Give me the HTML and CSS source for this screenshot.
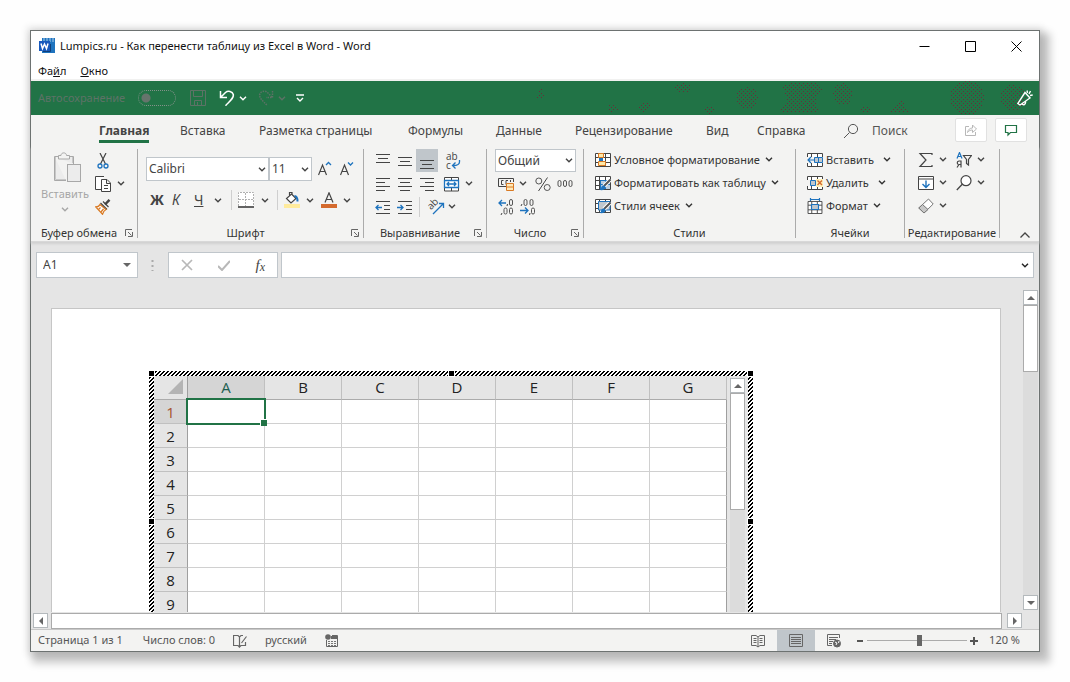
FILE: index.html
```html
<!DOCTYPE html>
<html lang="ru">
<head>
<meta charset="utf-8">
<title>Lumpics.ru - Как перенести таблицу из Excel в Word - Word</title>
<link rel="stylesheet" href="styles.css">
</head>
<body>
<svg class="defs" aria-hidden="true">
  <symbol id="chev" viewBox="0 0 8 5"><path d="M1 .8L4 3.8L7 .8" fill="none" stroke="currentColor" stroke-width="1.4"/></symbol>
  <symbol id="launch" viewBox="0 0 8 8"><path d="M.5 7V.5H7M3 3L6.5 6.5M7.5 3V7.5H3" fill="none" stroke="#666" /></symbol>
  <symbol id="grid" viewBox="0 0 16 14"><path d="M.5 .5H15.500V13.500H.5ZM.5 4.500H15.500M.5 9.500H15.500M4.500 .5V13.500M10.500 .5V13.500" fill="#fff" stroke="#444"/></symbol>
  <symbol id="pen" viewBox="0 0 12 12"><path d="M11.500 .5L5 7" stroke="#fff" stroke-width="4"/><path d="M11.500 .5L5 7" stroke="#555" stroke-width="2"/><path d="M5.500 6.500C3 6 2 8 2 9.500L.5 11C4 11.500 7 10.500 6.500 8Z" fill="#1e73be"/></symbol>
</svg>

<main class="window">
  <header class="titlebar">
    <svg class="i16" viewBox="0 0 16 16"><path d="M3 0H16V15H3Z" fill="#1e73be"/><path d="M4 1H15M4 3H15" stroke="#a9cdec" stroke-dasharray="2 1"/><path d="M0 3H11V13H0Z" fill="#185abd"/><path d="M2 5.500L3.500 10.500L5.500 6L7.500 10.500L9 5.500" fill="none" stroke="#fff" stroke-width="1.500"/><path d="M4 13.500H11.500V6" fill="none" stroke="#103f7a"/></svg>
    <h1>Lumpics.ru - Как перенести таблицу из Excel в Word - Word</h1>
    <div class="wincontrols">
      <button aria-label="Свернуть"><svg viewBox="0 0 11 11"><path d="M.5 5.500H10.500"/></svg></button>
      <button aria-label="Развернуть"><svg viewBox="0 0 11 11"><path d="M.5 .5H10.500V10.500H.5Z"/></svg></button>
      <button aria-label="Закрыть"><svg viewBox="0 0 11 11"><path d="M.5 .5L10.500 10.500M10.500 .5L.5 10.500"/></svg></button>
    </div>
  </header>
  <nav class="menubar"><a href="#file">Фа<u>й</u>л</a><a href="#window"><u>О</u>кно</a></nav>

  <div class="quick">
    <svg class="decor" viewBox="0 0 510 34" shape-rendering="crispEdges" aria-hidden="true">
      <defs><pattern id="dots" width="4" height="4" patternUnits="userSpaceOnUse"><path d="M0 0h1v1H0zM2 2h1v1H2z" fill="#653038"/></pattern></defs>
      <g fill="url(#dots)"><path d="M12 6L17 18H7Z"/><ellipse cx="84" cy="27" rx="5" ry="4"/><ellipse cx="115" cy="26" rx="6" ry="5"/><ellipse cx="154" cy="7" rx="8" ry="5"/><ellipse cx="180" cy="29" rx="5" ry="4"/><ellipse cx="218" cy="17" rx="11" ry="11"/><path d="M252 5L262 2H288L294 8L286 16L290 32H250L258 18Z"/><ellipse cx="314" cy="13" rx="10" ry="11"/><ellipse cx="336" cy="28" rx="5" ry="3"/><path d="M358 32L372 18L380 32Z"/><circle cx="438" cy="17" r="17"/><ellipse cx="484" cy="17" rx="13" ry="13"/></g>
    </svg>
    <label class="autosave"><span>Автосохранение</span><input type="checkbox" disabled></label>
    <button class="q-save" aria-label="Сохранить" disabled><svg class="i16" viewBox="0 0 16 16"><path d="M.5 .5H15.500V15.500H.5ZM3.500 .5V6.500H12.500V.5M4.500 15.500V10.500H11.500V15.500M7.500 12V15" fill="none" stroke="currentColor"/></svg></button>
    <button class="q-undo" aria-label="Отменить"><svg class="i16" viewBox="0 0 16 16"><path d="M1.500 1V7.500H8M2 7L6.500 2.500C9 .2 13.500 1.200 14.300 4.500C15 8 11.500 10.500 6.500 15.700" fill="none" stroke="currentColor" stroke-width="1.500"/></svg><svg class="chev"><use href="#chev"/></svg></button>
    <button class="q-redo" aria-label="Повторить" disabled><svg class="i16" viewBox="0 0 16 16"><path d="M14.500 1V7.500H8M14 7L9.500 2.500C7 .2 2.500 1.200 1.700 4.500C1 8 4.500 10.500 9.500 15.700" fill="none" stroke="currentColor" stroke-width="1.500" stroke-dasharray="1.500 1"/></svg><svg class="chev"><use href="#chev"/></svg></button>
    <button class="q-more" aria-label="Настройка панели"><svg class="i8" viewBox="0 0 8 8"><path d="M0 1H8M1 4L4 7L7 4" fill="none" stroke="currentColor" stroke-width="1.400"/></svg></button>
    <button class="q-horn" aria-label="Новые возможности"><svg class="i16" viewBox="0 0 16 16"><path d="M8 2.500L13 8L3 15L.8 13.500ZM5 13.500C6 16 9 14.500 8.500 11.500M10 .5L10.500 3M13.500 1L12 4M15.700 5L13 5.500" fill="none" stroke="#fff" stroke-width="1.400"/></svg></button>
  </div>

  <nav class="tabs">
    <a class="active" href="#home">Главная</a><a href="#insert">Вставка</a><a href="#layout">Разметка страницы</a><a href="#formulas">Формулы</a><a href="#data">Данные</a><a href="#review">Рецензирование</a><a href="#view">Вид</a><a href="#help">Справка</a>
    <a class="find" href="#search"><svg class="i16" viewBox="0 0 16 16"><circle cx="10" cy="6" r="4.600" fill="none" stroke="#555"/><path d="M6.500 9.500L1 15" stroke="#555"/></svg>Поиск</a>
    <div class="share">
      <button aria-label="Поделиться"><svg class="i14" viewBox="0 0 14 14"><path d="M5 3.500H1.500V12.500H11.500V9M3.500 9.500C4 6.500 6 5 8.500 5V2L12.500 6L8.500 9.500V7C6.500 7 5 7.500 3.500 9.500Z" fill="none" stroke="#b8b8b8"/></svg></button>
      <button aria-label="Примечания"><svg class="i14" viewBox="0 0 14 14"><path d="M1.500 2.500H12.500V9.500H6.500L4 12V9.500H1.500Z" fill="none" stroke="#217346" stroke-width="1.200"/></svg></button>
    </div>
  </nav>

  <section class="ribbon">
    <div class="group clip">
      <div class="body">
        <button class="paste" disabled><svg viewBox="0 0 28 31"><path d="M1.500 4.500H20.500V12M1.500 4.500V28.500H13" fill="#ececec" stroke="#a8a8a8"/><path d="M2.500 5V27.500H13M19.500 5V11" fill="none" stroke="#c8c8c8"/><path d="M5.500 7V3.500H8C8 0 13.500 0 13.500 3.500H16.500V7Z" fill="#f3f3f2" stroke="#a8a8a8"/><rect x="14.500" y="12.500" width="13" height="17" fill="#ececec" stroke="#a8a8a8"/></svg><span>Вставить</span><svg class="chev"><use href="#chev"/></svg></button>
        <div class="col">
          <button aria-label="Вырезать"><svg class="i16" viewBox="0 0 16 16"><path d="M5 0L10.500 11M11 0L5.500 11" stroke="#444" stroke-width="1.200"/><circle cx="5" cy="13" r="2" fill="none" stroke="#1e73be" stroke-width="1.300"/><circle cx="11" cy="13" r="2" fill="none" stroke="#1e73be" stroke-width="1.300"/></svg></button>
          <button aria-label="Копировать"><svg class="i16" viewBox="0 0 16 16"><path d="M6 13.500H.5V.5H9" fill="#fff" stroke="#444"/><path d="M6.500 3.500H12L15.500 7V15.500H6.500ZM11.500 3.500V7.500H15.500M9 9.500H13M9 12.500H13" fill="#fff" stroke="#444"/></svg><svg class="chev"><use href="#chev"/></svg></button>
          <button aria-label="Формат по образцу"><svg class="i16" viewBox="0 0 16 16"><path d="M14.500 .8L10 5.500" stroke="#444" stroke-width="2.500"/><path d="M5.500 4L12 10.500M8 2.500L13.500 8" stroke="#444" stroke-width="1.200"/><path d="M5 5.500C4 7.500 2.500 8 .8 8L7.500 15.200C8.500 12 10 11 11 10.500Z" fill="#fff" stroke="#d97a24" stroke-width="1.300"/><path d="M3.500 10.500L5.500 8.500M6 13L8.500 10" stroke="#d97a24" stroke-width="1.300"/></svg></button>
        </div>
      </div>
      <footer><span>Буфер обмена</span><button aria-label="Параметры буфера"><svg class="i8"><use href="#launch"/></svg></button></footer>
    </div>

    <div class="group font">
      <div class="body">
        <div class="row combos">
          <select aria-label="Шрифт"><option>Calibri</option></select><select aria-label="Размер"><option>11</option></select>
          <button aria-label="Увеличить размер"><svg class="i16" viewBox="0 0 16 16"><path d="M.5 14L4.500 4L8.500 14M2 10.500H7" fill="none" stroke="#444" stroke-width="1.200"/><path d="M8 4L10.500 1.500L13 4" fill="none" stroke="#1e73be" stroke-width="1.300"/></svg></button>
          <button aria-label="Уменьшить размер"><svg class="i16" viewBox="0 0 16 16"><path d="M.5 14L4.500 4L8.500 14M2 10.500H7" fill="none" stroke="#444" stroke-width="1.200"/><path d="M8 1.500L10.500 4L13 1.500" fill="none" stroke="#1e73be" stroke-width="1.300"/></svg></button>
        </div>
        <div class="row styles-row">
          <button class="fmt"><b>Ж</b></button><button class="fmt"><i>К</i></button><button class="fmt"><u>Ч</u></button><button aria-label="Вид подчеркивания"><svg class="chev"><use href="#chev"/></svg></button>
          <span class="sep"></span>
          <button aria-label="Границы"><svg class="i16" viewBox="0 0 16 16"><path d="M0 0H16V14H0Z" fill="#fff"/><path d="M.5 14V.5H15.500V14M7.500 1V14M1 7.500H15" fill="none" stroke="#b0b0b0" stroke-dasharray="2 1"/><path d="M0 15H16" stroke="#333" stroke-width="1.500"/></svg></button><button aria-label="Вид границ"><svg class="chev"><use href="#chev"/></svg></button>
          <span class="sep"></span>
          <button aria-label="Цвет заливки"><svg class="i16" viewBox="0 0 16 16"><path d="M0 12H16V16H0Z" fill="#ffeb9c"/><path d="M7.500 2L12 6.500L7 11L2.500 6.500ZM5.500 4V.5H8V3" fill="#fff" stroke="#444" stroke-width="1.200"/><path d="M10.500 4C13 4 13.500 6 13.500 9.500" fill="none" stroke="#1e73be" stroke-width="2"/></svg></button><button aria-label="Палитра заливки"><svg class="chev"><use href="#chev"/></svg></button>
          <button aria-label="Цвет текста"><svg class="i16" viewBox="0 0 16 16"><path d="M0 12H16V16H0Z" fill="#d46a2e"/><path d="M4 10.500L8 .8L12 10.500M5.500 7.500H10.500" fill="none" stroke="#444" stroke-width="1.200"/></svg></button><button aria-label="Палитра текста"><svg class="chev"><use href="#chev"/></svg></button>
        </div>
      </div>
      <footer><span>Шрифт</span><button aria-label="Параметры шрифта"><svg class="i8"><use href="#launch"/></svg></button></footer>
    </div>

    <div class="group align">
      <div class="body">
        <div class="row">
          <button aria-label="По верхнему краю"><svg class="i16" viewBox="0 0 16 16"><path d="M1 1.500H15M3 5.500H13M1 9.500H15"/></svg></button>
          <button aria-label="По середине"><svg class="i16" viewBox="0 0 16 16"><path d="M1 4.500H15M3 8.500H13M1 12.500H15"/></svg></button>
          <button class="on" aria-label="По нижнему краю"><svg class="i16" viewBox="0 0 16 16"><path d="M1 7.500H15M3 11.500H13M1 15.500H15"/></svg></button>
          <button class="wide wrap" aria-label="Перенести текст"><svg viewBox="0 0 18 20"><text x="3" y="9">ab</text><text x="3" y="18">c</text><path class="blue" d="M16.500 9V11C16.500 13.500 15 14.500 10 14.500M12.500 11.500L9.500 14.500L12.500 17.500"/></svg></button>
        </div>
        <div class="row">
          <button aria-label="По левому краю"><svg class="i16" viewBox="0 0 16 16"><path d="M1 2.500H15M1 6.500H10M1 10.500H15M1 14.500H10"/></svg></button>
          <button aria-label="По центру"><svg class="i16" viewBox="0 0 16 16"><path d="M1 2.500H15M3 6.500H13M1 10.500H15M3 14.500H13"/></svg></button>
          <button aria-label="По правому краю"><svg class="i16" viewBox="0 0 16 16"><path d="M1 2.500H15M6 6.500H15M1 10.500H15M6 14.500H15"/></svg></button>
          <button class="wide" aria-label="Объединить"><svg class="i16" viewBox="0 0 16 16"><path class="white" d="M1.500 1.500H15.500V15H1.500ZM8.500 1V4M8.500 12V15"/><path class="blue" d="M1.500 4.500H15.500V11.500H1.500ZM4 8H13M6 6L4 8L6 10M11 6L13 8L11 10"/></svg><svg class="chev"><use href="#chev"/></svg></button>
        </div>
        <div class="row">
          <button aria-label="Уменьшить отступ"><svg class="i16" viewBox="0 0 16 16"><path d="M1 2.500H15M9 6.500H15M9 10.500H15M1 14.500H15"/><path class="blue" d="M7 8.500H1M3.500 6L1 8.500L3.500 11"/></svg></button>
          <button aria-label="Увеличить отступ"><svg class="i16" viewBox="0 0 16 16"><path d="M1 2.500H15M9 6.500H15M9 10.500H15M1 14.500H15"/><path class="blue" d="M0 8.500H6M3.500 6L6 8.500L3.500 11"/></svg></button>
          <span class="sep"></span>
          <button class="orient" aria-label="Ориентация"><svg class="i16" viewBox="0 0 16 16"><text x="-1" y="8" transform="rotate(-45 5 5)">ab</text><path class="blue" d="M5 15L15 5M11 4.500H15.500V9"/></svg><svg class="chev"><use href="#chev"/></svg></button>
        </div>
      </div>
      <footer><span>Выравнивание</span><button aria-label="Параметры выравнивания"><svg class="i8"><use href="#launch"/></svg></button></footer>
    </div>

    <div class="group number">
      <div class="body">
        <select aria-label="Числовой формат"><option>Общий</option></select>
        <div class="row">
          <button aria-label="Денежный формат"><svg class="i16" viewBox="0 0 16 16"><path d="M8 10.500H.5V2.500H15.500V6M5.500 4.500H3.500V8.500H5.500M8 8.500V4.500H10M12.500 4V6" fill="none" stroke="#444"/><path class="coin" d="M8.500 7.500H15.500V14.500H8.500ZM8.500 11H15.500"/></svg><svg class="chev"><use href="#chev"/></svg></button>
          <button class="pct" aria-label="Процентный формат"><svg class="i16" viewBox="0 0 16 16"><circle cx="3.800" cy="5" r="3"/><circle cx="12.200" cy="11.500" r="3"/><path d="M12.500 1.500L3.500 15"/></svg></button>
          <button class="zeros" aria-label="Формат с разделителями"><svg class="i16" viewBox="0 0 16 16"><rect x="1" y="4.500" width="3" height="6" rx="1.500"/><rect x="6.500" y="4.500" width="3" height="6" rx="1.500"/><rect x="12" y="4.500" width="3" height="6" rx="1.500"/></svg></button>
        </div>
        <div class="row">
          <button aria-label="Увеличить разрядность"><svg class="i16" viewBox="0 0 16 16"><rect x="11.500" y="0.5" width="3" height="6" rx="1.500"/><rect x="6" y="9" width="3" height="6" rx="1.500"/><rect x="11.500" y="9" width="3" height="6" rx="1.500"/><path d="M4 14L3 16M9.500 5L9 7"/><path class="blue" d="M8 4H1M4 1L1 4L4 7"/></svg></button>
          <button aria-label="Уменьшить разрядность"><svg class="i16" viewBox="0 0 16 16"><rect x="4" y="0.5" width="3" height="6" rx="1.500"/><rect x="10" y="0.5" width="3" height="6" rx="1.500"/><rect x="11.500" y="9" width="3" height="6" rx="1.500"/><path d="M2 5L1 7M10 14L9.500 16"/><path class="blue" d="M0 11.500H8M5 8.500L8 11.500L5 14.500"/></svg></button>
        </div>
      </div>
      <footer><span>Число</span><button aria-label="Параметры числа"><svg class="i8"><use href="#launch"/></svg></button></footer>
    </div>

    <div class="group stylesg">
      <div class="body">
        <button class="cmd"><svg class="i16" viewBox="0 0 16 16"><use href="#grid" width="16" height="14" y="1"/><path d="M3.500 1.500H8.500V5.500H3.500ZM3.500 9.500H10.500V13.500H3.500Z" fill="#ffe9a8" stroke="#d97a24"/><path d="M4 7.500H8" stroke="#1e73be" stroke-width="3"/></svg><span>Условное форматирование</span><svg class="chev"><use href="#chev"/></svg></button>
        <button class="cmd"><svg class="i16" viewBox="0 0 16 16"><use href="#grid" width="16" height="14" y="1"/><path d="M5 6H15V14H5Z" fill="#b8cde0"/><path d="M5.500 14V5.500H15M5 9.500H15M10.500 6V14" fill="none" stroke="#1e73be"/><use href="#pen" x="4" y="4" width="12" height="12"/></svg><span>Форматировать как таблицу</span><svg class="chev"><use href="#chev"/></svg></button>
        <button class="cmd"><svg class="i16" viewBox="0 0 16 16"><use href="#grid" width="16" height="14" y="1"/><path d="M3.500 3.500H15V12H3.500Z" fill="#c0c7cd" stroke="#1e73be"/><use href="#pen" x="4" y="4" width="12" height="12"/></svg><span>Стили ячеек</span><svg class="chev"><use href="#chev"/></svg></button>
      </div>
      <footer><span>Стили</span></footer>
    </div>

    <div class="group cells">
      <div class="body">
        <button class="cmd spaced"><svg class="i16" viewBox="0 0 16 16"><use href="#grid" width="16" height="14" y="1"/><path d="M0 5H16V11H0Z" fill="#f3f3f2"/><path d="M7.500 5.500H15.500V10.500H7.500ZM11.500 5V11" fill="#c0c7cd" stroke="#1e73be"/><path d="M7 8H1M4 5L1 8L4 11" fill="none" stroke="#1e73be" stroke-width="1.200"/></svg><span>Вставить</span><svg class="chev"><use href="#chev"/></svg></button>
        <button class="cmd spaced"><svg class="i16" viewBox="0 0 16 16"><use href="#grid" width="16" height="14" y="1"/><path d="M0 5H16V11H0Z" fill="#f3f3f2"/><path d="M3.500 5.500H8.500V10.500H3.500Z" fill="#c0c7cd" stroke="#1e73be"/><path d="M9 4H16V12H9Z" fill="#fff0b8"/><path d="M10.500 5.500L15 10M15 5.500L10.500 10" stroke="#d46a2e" stroke-width="1.400"/></svg><span>Удалить</span><svg class="chev"><use href="#chev"/></svg></button>
        <button class="cmd"><svg class="i16" viewBox="0 0 16 16"><use href="#grid" width="16" height="13" y="3"/><path d="M4 0H12V3H4Z" fill="#f3f3f2"/><path d="M3.500 0V3M12.500 0V3M3.500 1.500H12.500M4.500 6.500H11.500V11.500H4.500Z" fill="#c0c7cd" stroke="#1e73be" stroke-width="1.200"/></svg><span>Формат</span><svg class="chev"><use href="#chev"/></svg></button>
      </div>
      <footer><span>Ячейки</span></footer>
    </div>

    <div class="group edit">
      <div class="body">
        <button aria-label="Сумма"><svg class="i16" viewBox="0 0 16 16"><path d="M14 3V1.500H2L8 8L2 14.500H14V13" fill="none" stroke="#444" stroke-width="1.200"/></svg><svg class="chev"><use href="#chev"/></svg></button>
        <button aria-label="Сортировка и фильтр"><svg class="i16" viewBox="0 0 16 16"><path d="M1 6.500L3.500 .5L6 6.500M2 4.500H5" fill="none" stroke="#1e73be" stroke-width="1.200"/><path d="M5 15.500V9H3C.5 9.500 .8 12.500 3 12.500H5M3 12.500L1 15.500" fill="none" stroke="#444" stroke-width="1.200"/><path d="M7.500 3.500H15.500L12.500 7.500V13L10.500 11.500V7.500Z" fill="none" stroke="#444" stroke-width="1.200"/></svg><svg class="chev"><use href="#chev"/></svg></button>
        <button aria-label="Заполнить"><svg class="i16" viewBox="0 0 16 16"><path d="M.5 1.500H15.500V14.500H.5ZM.5 4H15.500" fill="#fff" stroke="#444"/><path d="M8 5.500V12.500M4.500 9L8 12.500L11.500 9" fill="none" stroke="#1e73be" stroke-width="1.400"/></svg><svg class="chev"><use href="#chev"/></svg></button>
        <button aria-label="Найти и выделить"><svg class="i16" viewBox="0 0 16 16"><circle cx="10" cy="5.700" r="5" fill="#fff" stroke="#444" stroke-width="1.200"/><path d="M6.500 9L.8 15" stroke="#444" stroke-width="1.300"/></svg><svg class="chev"><use href="#chev"/></svg></button>
        <button aria-label="Очистить"><svg class="i16" viewBox="0 0 16 16"><path d="M10.500 1L15.200 6L6 15L.8 10Z" fill="#fff" stroke="#777"/><path d="M4.500 6.500L10 11.500L6 15L.8 10Z" fill="#c8c8c8" stroke="#777"/></svg><svg class="chev"><use href="#chev"/></svg></button>
      </div>
      <footer><span>Редактирование</span></footer>
    </div>
    <button class="collapse" aria-label="Свернуть ленту"><svg viewBox="0 0 10 6"><path d="M.5 5.500L5 1L9.500 5.500" fill="none" stroke="#444" stroke-width="1.300"/></svg></button>
  </section>

  <div class="formulabar">
    <label class="namebox"><input aria-label="Имя ячейки" value="A1"><svg class="i8" viewBox="0 0 8 8"><path d="M0 2H8L4 6Z" fill="#666"/></svg></label>
    <svg class="grip" viewBox="0 0 3 12"><path d="M1.500 1V12" stroke="#aaa" stroke-width="2" stroke-dasharray="2 3"/></svg>
    <div class="fxbox">
      <button aria-label="Отмена"><svg viewBox="0 0 12 12"><path d="M1 1L11 11M11 1L1 11" fill="none" stroke="#b8b8b8" stroke-width="1.700"/></svg></button>
      <button aria-label="Ввод"><svg viewBox="0 0 12 12"><path d="M0 7L4 11L12 2" fill="none" stroke="#b8b8b8" stroke-width="2"/></svg></button>
      <button class="fx" aria-label="Вставить функцию"><i>f</i><i class="sub">x</i></button>
    </div>
    <label class="formula"><input aria-label="Строка формул"><svg class="chev"><use href="#chev"/></svg></label>
  </div>

  <div class="work">
    <div class="page">
      <div class="object">
        <span class="h tl"></span><span class="h tm"></span><span class="h tr"></span><span class="h ml"></span><span class="h mr"></span>
        <div class="sheet">
          <table>
            <thead><tr><th class="corner"><svg viewBox="0 0 16 16"><path d="M15 0V15H0Z" fill="#b4b4b4"/></svg></th><th class="sel">A</th><th>B</th><th>C</th><th>D</th><th>E</th><th>F</th><th>G</th></tr></thead>
            <tbody>
              <tr><th class="sel">1</th><td class="cursor"></td><td></td><td></td><td></td><td></td><td></td><td></td></tr>
              <tr><th>2</th><td></td><td></td><td></td><td></td><td></td><td></td><td></td></tr>
              <tr><th>3</th><td></td><td></td><td></td><td></td><td></td><td></td><td></td></tr>
              <tr><th>4</th><td></td><td></td><td></td><td></td><td></td><td></td><td></td></tr>
              <tr><th>5</th><td></td><td></td><td></td><td></td><td></td><td></td><td></td></tr>
              <tr><th>6</th><td></td><td></td><td></td><td></td><td></td><td></td><td></td></tr>
              <tr><th>7</th><td></td><td></td><td></td><td></td><td></td><td></td><td></td></tr>
              <tr><th>8</th><td></td><td></td><td></td><td></td><td></td><td></td><td></td></tr>
              <tr><th>9</th><td></td><td></td><td></td><td></td><td></td><td></td><td></td></tr>
            </tbody>
          </table>
          <div class="vbar inner"><button aria-label="Вверх"><svg class="i8" viewBox="0 0 8 8"><path d="M0 6H8L4 2Z"/></svg></button><div class="thumb"></div></div>
        </div>
      </div>
    </div>
    <div class="vbar"><button aria-label="Вверх"><svg class="i8" viewBox="0 0 8 8"><path d="M0 6H8L4 2Z"/></svg></button><div class="thumb"></div><button class="end" aria-label="Вниз"><svg class="i8" viewBox="0 0 8 8"><path d="M0 2H8L4 6Z"/></svg></button></div>
  </div>
  <div class="hbar"><button aria-label="Влево"><svg class="i8" viewBox="0 0 8 8"><path d="M6 0V8L2 4Z"/></svg></button><div class="thumb"></div><button aria-label="Вправо"><svg class="i8" viewBox="0 0 8 8"><path d="M2 0V8L6 4Z"/></svg></button></div>

  <footer class="status">
    <span>Страница 1 из 1</span><span class="words">Число слов: 0</span>
    <button aria-label="Правописание"><svg class="i14" viewBox="0 0 14 14"><path d="M5 11.500H.5V1.500H5L6.500 3L8 1.500H10M6.500 3V13L8 11.500H12.500V8M6.500 13L5 11.500M8.500 9L13.500 2.500" fill="none" stroke="#666" stroke-width="1.200"/></svg></button>
    <span>русский</span>
    <button class="macro" aria-label="Запись макроса"><svg class="i14" viewBox="0 0 14 14"><path d="M1.500 6V12.500H12.500V1.500H7" fill="none" stroke="#666"/><path d="M6 2H13V5H6Z" fill="#666"/><path d="M3 7.500H12M3 9.500H12M3 11.500H12" stroke="#777" stroke-dasharray="2 1"/><circle cx="3" cy="3" r="2.800" fill="#666"/></svg></button>
    <div class="views">
      <button aria-label="Режим чтения"><svg class="i14" viewBox="0 0 14 14"><path d="M.5 1.500H5L7 3L9 1.500H13.500V11.500H9L7 13L5 11.500H.5ZM7 3V13M2.500 4.500H5.500M2.500 6.500H5.500M2.500 8.500H5.500M8.500 4.500H11.500M8.500 6.500H11.500M8.500 8.500H11.500"/></svg></button>
      <button class="on" aria-label="Разметка страницы"><svg class="i14" viewBox="0 0 14 14"><path d="M.5 .5H13.500V12.500H.5ZM2 3.500H12M2 5.500H12M2 7.500H12M2 9.500H12"/></svg></button>
      <button aria-label="Веб-документ"><svg class="i14" viewBox="0 0 14 14"><path d="M5 11.500H.5V.5H12.500V4M2 3.500H11M2 5.500H9M2 7.500H6M2 9.500H5"/><circle cx="10" cy="9.500" r="3.500" fill="#666"/><path d="M8 8L10 9L9 11M12 7L11.500 9" stroke="#fff"/></svg></button>
    </div>
    <button class="zoombtn" aria-label="Уменьшить"><svg class="i8" viewBox="0 0 8 8"><path d="M1 4H7" stroke="#555" stroke-width="2"/></svg></button>
    <input type="range" aria-label="Масштаб" min="0" max="100" value="53">
    <button class="zoombtn" aria-label="Увеличить"><svg class="i8" viewBox="0 0 8 8"><path d="M0 4H8M4 0V8" stroke="#555" stroke-width="2"/></svg></button>
    <span class="pctval">120 %</span>
  </footer>
</main>
</body>
</html>
```

FILE: styles.css
```css
* { box-sizing: border-box; }
body { margin: 0; padding: 30px; height: 100vh; background: #fefefe; color: #222; font: 11px/16px "Noto Sans", "Open Sans", sans-serif; }
button { border: 0; padding: 0; background: none; font: inherit; color: #444; display: flex; align-items: center; }
a { color: inherit; text-decoration: none; }
svg { display: block; flex: none; }
input, select { font: inherit; font-size: 12px; color: #444; }
.defs { position: absolute; width: 0; height: 0; }
.i16 { width: 16px; height: 16px; }
.i14 { width: 14px; height: 14px; }
.i8 { width: 8px; height: 8px; }
.chev { width: 8px; height: 5px; }

.window { height: 100%; display: flex; flex-direction: column; background: #e5e5e5; border: 1px solid #6d7271; box-shadow: 0 0 7px 3px rgba(0,0,0,.1), 6px 7px 8px 4px rgba(0,0,0,.22); }

.titlebar { height: 30px; display: flex; align-items: center; gap: 5px; padding-left: 8px; background: #fff; }
.titlebar h1 { margin: 0; flex: 1; font-size: 11px; font-weight: 400; color: #111; white-space: nowrap; }
.wincontrols { display: flex; }
.wincontrols button { width: 46px; height: 28px; justify-content: center; }
.wincontrols svg { width: 11px; height: 11px; fill: none; stroke: #000; stroke-width: 1; }
.menubar { height: 20px; display: flex; gap: 14px; padding: 2px 7px; background: #fff; color: #111; border-bottom: 2px solid #f1f1f0; }

.quick { position: relative; height: 34px; display: flex; align-items: center; padding: 0 6px 0 7px; background: #217346; color: #fff; }
.quick button { position: relative; color: #fff; gap: 4px; }
.quick button:disabled, .autosave { color: #5d7266; }
.decor { position: absolute; right: 0; top: 0; width: 510px; height: 34px; }
.autosave { display: flex; align-items: center; gap: 6px; width: 138px; }
.autosave span { flex: 1; }
.autosave input { appearance: none; margin: 0; width: 38px; height: 16px; border: 1px dotted #84918a; border-radius: 8px; background: radial-gradient(circle at 7px 7px, #66746c 4px, transparent 5px); }
.q-save { margin-left: 14px; }
.q-undo { margin-left: 13px; }
.q-redo { margin-left: 11px; }
.q-more { margin-left: 10px; }
.q-horn { margin-left: auto; }

.tabs { height: 31px; display: grid; grid-template-columns: 81px 79px 149px 88px 79px 131px 51px 86px 82px 1fr; padding-left: 68px; background: #f3f3f2; color: #444; font-size: 12px; }
.tabs a { height: 28px; line-height: 31px; white-space: nowrap; }
.tabs .active { justify-self: start; font-weight: 700; border-bottom: 3px solid #217346; }
.tabs .find { display: flex; align-items: center; gap: 13px; height: 31px; color: #555; }
.share { display: flex; justify-content: flex-end; gap: 8px; padding: 3px 12px 0 0; }
.share button { width: 32px; height: 24px; justify-content: center; background: #fff; border: 1px solid #e1e1e1; border-radius: 2px; }

.ribbon { height: 96px; display: flex; padding-top: 3px; background: #f3f3f2; border-bottom: 1px solid #d8d8d8; box-shadow: 0 2px 2px #d0d0d0; }
.group { display: flex; flex-direction: column; height: 89px; border-right: 1px solid #ababab; color: #333; }
.group .body { flex: 1; }
.group footer { height: 14px; display: flex; align-items: center; justify-content: center; margin-bottom: -2px; line-height: 14px; white-space: nowrap; }
.group footer span { flex: 1; text-align: center; }
.row { display: flex; height: 23px; align-items: center; }
.sep { width: 1px; height: 20px; background: #cfcfcf; }
.cmd { height: 23px; padding-bottom: 2px; gap: 3px; white-space: nowrap; color: #333; }
.cmd .chev { margin-left: 2px; }

.clip { width: 107px; }
.clip .body { display: flex; padding-left: 9px; }
.paste { width: 50px; flex-direction: column; padding-top: 3px; gap: 3px; }
.paste svg:first-child { width: 28px; height: 31px; margin-left: 4px; }
.paste:disabled { color: #a6a6a6; }
.paste .chev { margin-top: 2px; }
.clip .col { padding-left: 5px; }
.clip .col button { height: 23px; gap: 6px; }
.clip footer, .font footer, .align footer, .number footer { padding: 0 4px 0 2px; }

.font { width: 226px; }
.font .body { padding: 8px 8px 0; }
.font select, .number select { appearance: none; height: 24px; margin: 0; padding: 0 2px; border: 1px solid #c0c6cb; border-radius: 0; background: #fff url("data:image/svg+xml,%3Csvg xmlns='http://www.w3.org/2000/svg' width='8' height='5'%3E%3Cpath d='M1 .8L4 3.8L7 .8' fill='none' stroke='%23444' stroke-width='1.4'/%3E%3C/svg%3E") no-repeat right 2px center; }
.combos { height: 24px; display: grid; grid-template-columns: 123px 43px 22px 22px; }
.combos button { justify-content: flex-end; }
.styles-row { margin-top: 7px; height: 24px; display: grid; align-items: center; grid-template-columns: 22px 22px 24px 17px 7px 23px 16px 7px 22px 15px 22px 10px; }
.styles-row .fmt { font-size: 14px; padding-left: 4px; }

.align { width: 123px; }
.align .body { padding-left: 8px; }
.align .row button { width: 22px; height: 23px; justify-content: center; }
.align .row .wide { width: auto; margin-left: 5px; gap: 6px; }
.align .wrap svg { width: 18px; height: 20px; }
.align .row .orient { width: auto; margin-left: 8px; gap: 4px; }
.align .sep { margin-left: 3px; }
.align .on, .views .on { background: #c0c6cb; }
.align path, .number path { fill: none; stroke: #444; }
.align path.white { fill: #fff; }
.align path.blue, .number path.blue { stroke: #1e73be; stroke-width: 1.3; }
.number path.coin { fill: #ffe9b8; stroke: #d97a24; }
.align text { font: 10px "Open Sans", sans-serif; fill: #444; }
.align svg { overflow: visible; }
.number circle, .number rect { fill: none; stroke: #555; }

.number { width: 97px; }
.number .body { padding-left: 8px; }
.number select { width: 81px; height: 23px; display: block; }
.number .row { padding-left: 3px; gap: 6px; }
.number .row button { gap: 5px; }
.number .pct { margin-left: 2px; }

.stylesg { width: 212px; }
.stylesg .body, .cells .body { padding-left: 11px; }
.cells { width: 109px; }
.cells .spaced .chev { margin-left: 6px; }
.edit { width: 95px; }
.edit .body { display: grid; grid-template-columns: 38px 1fr; grid-auto-rows: 23px; align-content: start; padding-left: 13px; }
.edit button { gap: 5px; padding-bottom: 2px; }
.edit footer { padding: 0 2px; }
.collapse { margin-left: auto; align-self: flex-end; padding: 0 9px 3px 0; }
.collapse svg { width: 10px; height: 6px; }

.formulabar { display: flex; padding: 10px 5px 12px; }
.formulabar label, .fxbox { display: flex; align-items: center; height: 26px; background: #fff; border: 1px solid #c0c6cb; }
.formulabar input { flex: 1; min-width: 0; border: 0; background: none; padding: 0 6px; }
.namebox { width: 102px; padding-right: 6px; }
.grip { width: 3px; height: 12px; margin: 7px 14px 0 13px; }
.fxbox { width: 110px; justify-content: space-between; padding: 0 12px; margin-right: 3px; }
.fxbox svg { width: 12px; height: 12px; }
.fx { font: 15px/20px "Liberation Serif", serif; color: #444; }
.fx .sub { font-size: 12px; padding-top: 4px; }
.formula { flex: 1; padding-right: 4px; }

.work { flex: 1; min-height: 0; display: flex; gap: 22px; padding: 0 1px 1px 20px; }
.page { flex: 1; min-width: 0; margin-top: 18px; padding: 62px 0 0 97px; overflow: hidden; background: #fff; border: 1px solid #c6c6c6; border-bottom: 0; }
.object { position: relative; width: 604px; padding: 5px; background: url("data:image/svg+xml,%3Csvg xmlns='http://www.w3.org/2000/svg' width='4' height='4' shape-rendering='crispEdges'%3E%3Cpath fill='%23fff' d='M0 0h4v4H0z'/%3E%3Cpath d='M2 0h2v1H2zM1 1h2v1H1zM0 2h2v1H0zM3 3h1v1H3zM0 3h1v1H0z'/%3E%3C/svg%3E"); }
.h { position: absolute; width: 5px; height: 5px; background: #000; outline: 1px solid #fff; }
.tl { left: 0; top: 0; }
.tm { left: 50%; top: 0; margin-left: -2px; }
.tr { right: 0; top: 0; }
.ml { left: 0; top: 148px; }
.mr { right: 0; top: 148px; }
.sheet { display: flex; justify-content: space-between; background: #e5e5e5; }
table { border-collapse: separate; border-spacing: 0; table-layout: fixed; width: 573px; font-family: "Open Sans", sans-serif; font-size: 15px; line-height: 20px; color: #222; }
th, td { height: 24px; padding: 0; border-right: 1px solid #d0d0d0; border-bottom: 1px solid #d0d0d0; }
td { background: #fff; }
th { background: #e5e5e5; font-weight: 400; border-color: #ababab; }
tbody th { border-bottom-color: #c0c0c0; }
thead th { padding-bottom: 2px; border-right-color: #c0c0c0; }
td:last-child { border-right-color: #9f9f9f; }
th:first-child { width: 34px; border-right-color: #9f9f9f; }
.corner svg { width: 16px; height: 16px; margin-left: auto; margin-right: 3px; }
.sel { background: #d5d5d5; color: #1c5f50; }
tbody .sel { color: #a5522f; }
.cursor { position: relative; }
.cursor::before { content: ""; position: absolute; inset: -2px; border: 2px solid #217346; }
.cursor::after { content: ""; position: absolute; right: -3px; bottom: -3px; width: 6px; height: 6px; background: #217346; border: solid #fff; border-width: 1px 0 0 1px; }

.vbar { width: 15px; display: flex; flex-direction: column; background: #dcdcdc; }
.vbar button, .hbar button { width: 15px; height: 15px; justify-content: center; background: #fff; border: 1px solid #b4b9bc; }
.vbar svg, .hbar svg { fill: #666; }
.thumb { background: #fff; border: 1px solid #ababab; }
.vbar .thumb { height: 67px; }
.vbar .end { margin-top: auto; }
.work > .vbar { margin-bottom: 2px; }
.inner { margin: 2px 3px 0 0; }
.inner .thumb { height: 117px; }
.hbar { display: flex; gap: 3px; height: 16px; padding: 0 17px 0 2px; }
.hbar .thumb { flex: 1; margin-right: 2px; height: 16px; }

.status { height: 22px; display: flex; align-items: center; padding: 0 19px 0 7px; background: #f3f3f2; border-top: 1px solid #c8c8c8; color: #555; white-space: nowrap; gap: 18px; }
.status span { padding-bottom: 2px; }
.status .words { padding-left: 2px; }
.views { display: flex; height: 21px; margin-left: auto; }
.views button { width: 38px; justify-content: center; }
.views svg { fill: none; stroke: #666; }
.status .zoombtn { margin: 0 -15px; }
.status input { appearance: none; width: 100px; height: 12px; margin: 0; background: linear-gradient(#ababab, #ababab) no-repeat center / 100% 1px; }
.status input::-webkit-slider-thumb { appearance: none; width: 5px; height: 11px; background: #666; }
.status .pctval { margin-left: 8px; }
```
